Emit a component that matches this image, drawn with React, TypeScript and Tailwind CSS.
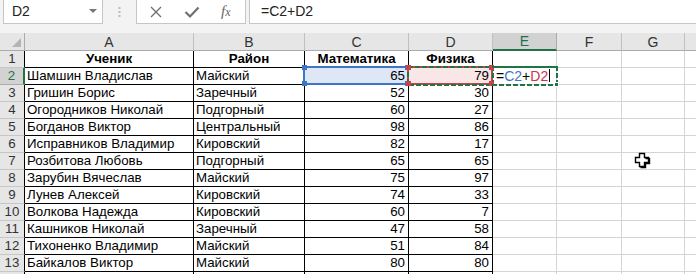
import React from "react";

const FONT = { fontFamily: '"Liberation Sans", Arial, sans-serif' };

type Row = [string, string, string, string];
const data: Row[] = [
  ["Шамшин Владислав", "Майский", "65", "79"],
  ["Гришин Борис", "Заречный", "52", "30"],
  ["Огородников Николай", "Подгорный", "60", "27"],
  ["Богданов Виктор", "Центральный", "98", "86"],
  ["Исправников Владимир", "Кировский", "82", "17"],
  ["Розбитова Любовь", "Подгорный", "65", "65"],
  ["Зарубин Вячеслав", "Майский", "75", "97"],
  ["Лунев Алексей", "Кировский", "74", "33"],
  ["Волкова Надежда", "Кировский", "60", "7"],
  ["Кашников Николай", "Заречный", "47", "58"],
  ["Тихоненко Владимир", "Майский", "51", "84"],
  ["Байкалов Виктор", "Майский", "80", "80"],
];

function Corner({ color, pos }: { color: string; pos: string }) {
  return <div className={`absolute w-[5px] h-[5px] ${color} ${pos}`} />;
}

function Handles({ color }: { color: string }) {
  return (
    <>
      <Corner color={color} pos="-left-[3px] -top-[3px]" />
      <Corner color={color} pos="-right-[3px] -top-[3px]" />
      <Corner color={color} pos="-left-[3px] -bottom-[3px]" />
      <Corner color={color} pos="-right-[3px] -bottom-[3px]" />
    </>
  );
}

function TopBar() {
  return (
    <div className="h-[33px] bg-[#f3f3f3] flex items-start text-[14px] text-[#222]">
      <div className="ml-[3px] w-[100px] h-[24px] bg-white border border-t-0 border-[#c6c6c6] flex items-center justify-between pl-[8px] pr-[3px]">
        <span>D2</span>
        <svg width="8" height="5" viewBox="0 0 8 5" className="mr-[2px]">
          <path d="M0 0 L8 0 L4 4 Z" fill="#777" />
        </svg>
      </div>
      <div className="w-[33px] h-[24px] flex items-center justify-center">
        <svg width="3" height="10" viewBox="0 0 3 10">
          <rect x="0.5" y="0" width="2" height="2" fill="#bbb" />
          <rect x="0.5" y="4" width="2" height="2" fill="#bbb" />
          <rect x="0.5" y="8" width="2" height="2" fill="#bbb" />
        </svg>
      </div>
      <div className="w-[110px] h-[24px] bg-white border border-t-0 border-[#c6c6c6] flex items-center">
        <svg width="14" height="14" viewBox="0 0 14 14" className="ml-[12px]">
          <path d="M2 2 L12 12 M12 2 L2 12" stroke="#707070" strokeWidth="1.4" />
        </svg>
        <svg width="16" height="14" viewBox="0 0 16 14" className="ml-[21px]">
          <path d="M1.5 7 L6 11.5 L14.5 2.5" stroke="#707070" strokeWidth="2.2" fill="none" />
        </svg>
        <span
          className="ml-[21px] italic text-[15px] text-[#666]"
          style={{ fontFamily: '"Liberation Serif", "Times New Roman", serif' }}
        >
          f<span className="text-[12px]">x</span>
        </span>
      </div>
      <div className="ml-[3px] flex-1 h-[24px] bg-white border-l border-b border-[#c6c6c6] flex items-center pl-[11px]">
        =C2+D2
      </div>
    </div>
  );
}

const colW = ["w-[169px]", "w-[111px]", "w-[104px]", "w-[84px]", "w-[64px]", "w-[65px]", "w-[63px]"];
const letters = ["A", "B", "C", "D", "E", "F", "G"];

function Header() {
  return (
    <div className="flex h-[18px] bg-[#e6e6e6] text-[14px] text-[#333]">
      <div className="w-[25px] shrink-0 border-r border-b border-[#ababab] relative">
        <svg width="9" height="9" viewBox="0 0 9 9" className="absolute right-[3px] bottom-[3px]">
          <path d="M9 0 L9 9 L0 9 Z" fill="#b4b4b4" />
        </svg>
      </div>
      {letters.map((l, i) =>
        l === "E" ? (
          <div
            key={l}
            className={`${colW[i]} shrink-0 bg-[#d2d2d2] border-r border-[#ababab] border-b-2 border-b-[#217346] text-[#217346] flex items-center justify-center leading-none`}
          >
            {l}
          </div>
        ) : (
          <div
            key={l}
            className={`${colW[i]} shrink-0 border-r border-b border-r-[#c0c0c0] border-b-[#ababab] flex items-center justify-center leading-none`}
          >
            {l}
          </div>
        )
      )}
      <div className="flex-1 border-b border-[#ababab]" />
    </div>
  );
}

function RowHead({ n, active, table }: { n?: number; active?: boolean; table?: boolean }) {
  if (active)
    return (
      <div className="w-[25px] shrink-0 bg-[#d2d2d2] border-b border-b-[#ababab] border-r-2 border-r-[#217346] text-[#217346] flex items-center justify-center">
        {n}
      </div>
    );
  return (
    <div
      className={`w-[25px] shrink-0 bg-[#e6e6e6] border-b border-b-[#c6c6c6] border-r ${
        table ? "border-r-black" : "border-r-[#ababab]"
      } text-[#333] flex items-center justify-center`}
    >
      {n}
    </div>
  );
}

function Cell({
  w,
  children,
  right,
  bold,
  center,
  black,
}: {
  w: string;
  children?: React.ReactNode;
  right?: boolean;
  bold?: boolean;
  center?: boolean;
  black?: boolean;
}) {
  return (
    <div
      className={`${w} shrink-0 relative border-r border-b ${black ? "border-black" : "border-[#d4d4d4]"} flex items-end leading-[16px] whitespace-nowrap ${
        right ? "justify-end pr-[3px]" : center ? "justify-center" : "pl-[2px]"
      } ${bold ? "font-bold" : ""}`}
    >
      {children}
    </div>
  );
}

function Ants({ w, h, sides }: { w: number; h: number; sides: "all" | "rb" }) {
  return (
    <svg
      width={w}
      height={h}
      className={`absolute pointer-events-none ${sides === "all" ? "-left-[2px] -top-[2px]" : "left-0 top-0"}`}
      viewBox={`0 0 ${w} ${h}`}
    >
      {sides === "all" ? (
        <rect x="1" y="1" width={w - 2} height={h - 2} fill="none" stroke="#217346" strokeWidth="2" strokeDasharray="5 2" />
      ) : (
        <>
          <path d={`M0 1 L${w} 1`} stroke="#217346" strokeWidth="2" />
          <path d={`M${w - 1} 0 L${w - 1} ${h}`} stroke="#217346" strokeWidth="2" strokeDasharray="5 2" />
          <path d={`M0 ${h - 1} L${w} ${h - 1}`} stroke="#217346" strokeWidth="2" strokeDasharray="5 2" />
        </>
      )}
    </svg>
  );
}

export default function App() {
  return (
    <div className="relative w-[696px] h-[274px] overflow-hidden bg-white text-[13.3px] text-black" style={FONT}>
      <TopBar />
      <Header />
      {/* Row 1 */}
      <div className="flex h-[17px]">
        <RowHead n={1} table />
        <Cell w={colW[0]} bold center black>Ученик</Cell>
        <Cell w={colW[1]} bold center black>Район</Cell>
        <Cell w={colW[2]} bold center black>Математика</Cell>
        <Cell w={colW[3]} bold center black>Физика</Cell>
        <Cell w={colW[4]} />
        <Cell w={colW[5]} />
        <Cell w={colW[6]} />
        <div className="flex-1 border-b border-[#d4d4d4]" />
      </div>
      {data.map((r, idx) => {
        const n = idx + 2;
        const first = n === 2;
        return (
          <div key={n} className="flex h-[17px]">
            <RowHead n={n} active={first} table />
            <Cell w={colW[0]} black>{r[0]}</Cell>
            <Cell w={colW[1]} black>{r[1]}</Cell>
            {first ? (
              <div className={`${colW[2]} shrink-0 relative border-r border-b border-black bg-[#dde7f5] flex items-end justify-end pr-[3px] leading-[16px] z-10`}>
                {r[2]}
                <div className="absolute -left-[2px] -top-[2px] -right-[1px] -bottom-[1px] border-2 border-[#3f74c6]">
                  <Handles color="bg-[#3f74c6]" />
                </div>
              </div>
            ) : (
              <Cell w={colW[2]} right black>{r[2]}</Cell>
            )}
            {first ? (
              <div className={`${colW[3]} shrink-0 relative border-r border-b border-black bg-[#f9e6e6] flex items-end justify-end pr-[3px] leading-[16px] z-20`}>
                {r[3]}
                <div className="absolute -left-[2px] -top-[2px] -right-[1px] -bottom-[1px] border-2 border-[#c8424a]">
                  <Ants w={87} h={20} sides="all" />
                  <Handles color="bg-[#c8424a]" />
                </div>
              </div>
            ) : (
              <Cell w={colW[3]} right black>{r[3]}</Cell>
            )}
            {first ? (
              <div className={`${colW[4]} shrink-0 relative border-r border-b border-[#d4d4d4] flex items-end pl-[3px] leading-[16px] z-30 text-[14px]`}>
                <span>=</span>
                <span className="text-[#3f74c6]">C2</span>
                <span>+</span>
                <span className="text-[#d0304a]">D2</span>
                <span className="ml-[1px] mb-[2px] w-px h-[13px] bg-black" />
                <div className="absolute -left-[1px] -top-[2px] -right-[1px] -bottom-[1px]">
                  <Ants w={66} h={20} sides="rb" />
                  <div className="absolute -right-[2px] -bottom-[2px] w-[5px] h-[5px] bg-[#217346] border border-white" />
                </div>
              </div>
            ) : (
              <Cell w={colW[4]} />
            )}
            <Cell w={colW[5]} />
            <Cell w={colW[6]} />
            <div className="flex-1 border-b border-[#d4d4d4]" />
          </div>
        );
      })}
      {/* Row 14 partial */}
      <div className="flex h-[17px]">
        <RowHead table />
        <Cell w={colW[0]} black />
        <Cell w={colW[1]} black />
        <Cell w={colW[2]} black />
        <Cell w={colW[3]} black />
        <Cell w={colW[4]} />
        <Cell w={colW[5]} />
        <Cell w={colW[6]} />
        <div className="flex-1" />
      </div>
      {/* mouse cursor */}
      <svg width="17" height="17" viewBox="0 0 17 17" className="absolute left-[634px] top-[152px]">
        <path
          d="M5.5 1.5 H10.5 V5.5 H14.5 V10.5 H10.5 V14.5 H5.5 V10.5 H1.5 V5.5 H5.5 Z"
          fill="white"
          stroke="black"
          strokeWidth="1.4"
        />
        <path d="M11.5 6.5 H15.5 V11.5 H11.5 V15.5 H6.5" fill="none" stroke="black" strokeWidth="1.4" />
      </svg>
    </div>
  );
}
